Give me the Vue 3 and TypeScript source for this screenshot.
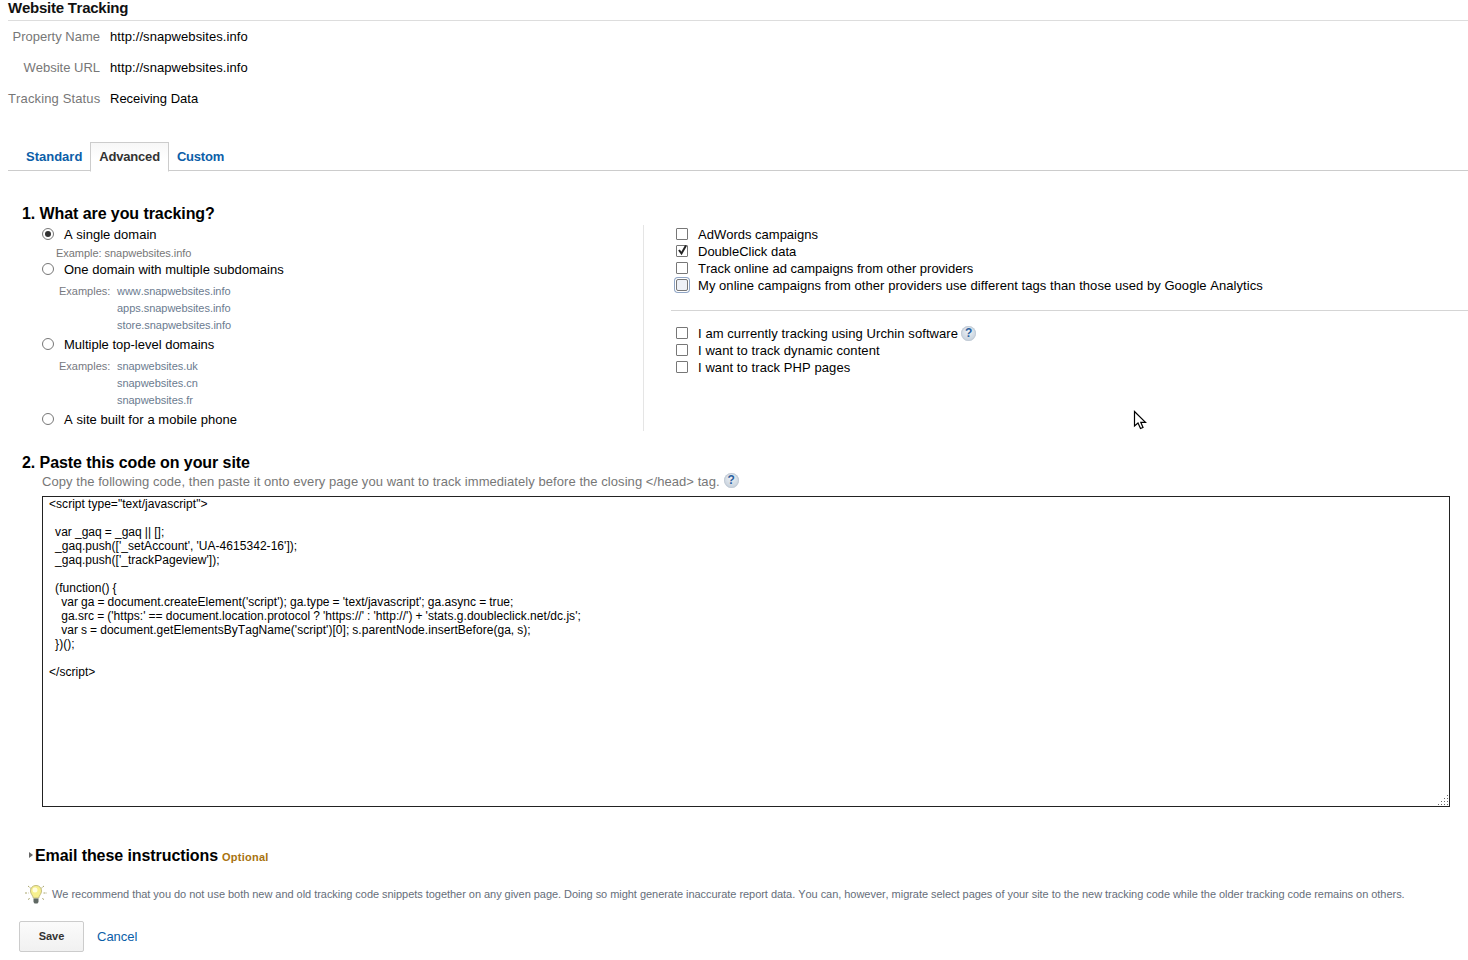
<script setup lang="ts">
const fields = [
  { label: 'Property Name', value: 'http://snapwebsites.info', cls: 'url' },
  { label: 'Website URL', value: 'http://snapwebsites.info', cls: 'url' },
  { label: 'Tracking Status', value: 'Receiving Data', cls: 'status' },
]
const campaigns = [
  { text: 'AdWords campaigns', checked: false, cls: '' },
  { text: 'DoubleClick data', checked: true, cls: '' },
  { text: 'Track online ad campaigns from other providers', checked: false, cls: '' },
  { text: 'My online campaigns from other providers use different tags than those used by Google Analytics', checked: false, focus: true, cls: 'wide' },
]
const code = `<script type="text/javascript">

  var _gaq = _gaq || [];
  _gaq.push(['_setAccount', 'UA-4615342-16']);
  _gaq.push(['_trackPageview']);

  (function() {
    var ga = document.createElement('script'); ga.type = 'text/javascript'; ga.async = true;
    ga.src = ('https:' == document.location.protocol ? 'https://' : 'http://') + 'stats.g.doubleclick.net/dc.js';
    var s = document.getElementsByTagName('script')[0]; s.parentNode.insertBefore(ga, s);
  })();

<\/script>`
const gripDots = [
  [9, 0],
  [6, 3], [9, 3],
  [3, 6], [6, 6], [9, 6],
  [0, 9], [3, 9], [6, 9], [9, 9],
]
</script>

<template>
  <div class="page">
    <h1 class="title">Website Tracking</h1>
    <div class="fields">
      <div v-for="f in fields" :key="f.label" class="field" :class="f.cls">
        <span class="flabel">{{ f.label }}</span>
        <span class="fvalue">{{ f.value }}</span>
      </div>
    </div>

    <div class="tabs">
      <a class="tab">Standard</a>
      <a class="tab active">Advanced</a>
      <a class="tab custom">Custom</a>
    </div>

    <h2 class="h1st">1. What are you tracking?</h2>
    <div class="columns">
      <div class="left">
        <label class="opt"><span class="radio on"></span>A single domain</label>
        <div class="ex1">Example: snapwebsites.info</div>
        <label class="opt"><span class="radio"></span>One domain with multiple subdomains</label>
        <div class="exs">
          <span class="exl">Examples:</span>
          <div class="hosts"><div>www.snapwebsites.info</div><div>apps.snapwebsites.info</div><div>store.snapwebsites.info</div></div>
        </div>
        <label class="opt"><span class="radio"></span>Multiple top-level domains</label>
        <div class="exs">
          <span class="exl">Examples:</span>
          <div class="hosts"><div>snapwebsites.uk</div><div>snapwebsites.cn</div><div>snapwebsites.fr</div></div>
        </div>
        <label class="opt wide2"><span class="radio"></span>A site built for a mobile phone</label>
      </div>
      <div class="right">
        <div class="group">
          <label v-for="c in campaigns" :key="c.text" class="chk" :class="c.cls">
            <span class="box" :class="{ focus: c.focus }">
              <svg v-if="c.checked" width="11" height="11" viewBox="0 0 11 11"><path d="M2 5 L4.500 8.500 L9 0.500" fill="none" stroke="#222" stroke-width="2"/></svg>
            </span>{{ c.text }}
          </label>
        </div>
        <div class="sep"></div>
        <div class="group">
          <label class="chk wider"><span class="box"></span>I am currently tracking using Urchin software<span class="help">?</span></label>
          <label class="chk wider"><span class="box"></span>I want to track dynamic content</label>
          <label class="chk wider"><span class="box"></span>I want to track PHP pages</label>
        </div>
      </div>
    </div>

    <h2 class="h2nd">2. Paste this code on your site</h2>
    <p class="copy">Copy the following code, then paste it onto every page you want to track immediately before the closing &lt;/head&gt; tag.<span class="help">?</span></p>
    <div class="codewrap">
      <textarea class="code" readonly :value="code"></textarea>
      <svg class="grip" width="10" height="10" viewBox="0 0 10 10">
        <rect v-for="d in gripDots" :key="d.join()" :x="d[0]" :y="d[1]" width="1" height="1" fill="#666" />
      </svg>
    </div>

    <div class="email">
      <span class="arrow"></span><span class="etitle">Email these instructions</span><span class="optional">Optional</span>
    </div>

    <div class="tip">
      <svg class="bulb" width="22" height="22" viewBox="0 0 22 22">
        <g stroke="#a9a56c" stroke-width="1" stroke-dasharray="2 1">
          <path d="M3 3 L6 5.500M19 3 L16 5.500M0 10 H3.500M18.500 10 H22M3 16.500 L5.500 15M19 16.500 L16.500 15"/>
        </g>
        <path d="M11 2.500 C7.500 2.500 5.500 5 5.500 8 C5.500 11 8 12.500 8.300 15 H13.700 C14 12.500 16.500 11 16.500 8 C16.500 5 14.500 2.500 11 2.500Z" fill="#f7f08e" stroke="#c4bd80"/>
        <ellipse cx="10" cy="7" rx="2.500" ry="2.500" fill="#fffde0"/>
        <path d="M8.500 15.500 H13.500 V19 L12.500 20.500 H9.500 L8.500 19Z" fill="#5f6863"/>
      </svg>
      <span>We recommend that you do not use both new and old tracking code snippets together on any given page. Doing so might generate inaccurate report data. You can, however, migrate select pages of your site to the new tracking code while the older tracking code remains on others.</span>
    </div>

    <div class="actions">
      <button class="save">Save</button>
      <a class="cancel">Cancel</a>
    </div>

    <svg class="cursor" width="14" height="21" viewBox="0 0 14 21">
      <path d="M1.500 1.500 V16 L5 13 L7.500 18.500 L10 17.500 L7.800 12.300 H12.500Z" fill="#fff" stroke="#000" stroke-width="1.200" stroke-linejoin="miter"/>
    </svg>
  </div>
</template>

<style>
html, body { margin: 0; background: #fff; }
</style>

<style scoped>
.page {
  position: relative;
  width: 1468px;
  height: 960px;
  overflow: hidden;
  padding-left: 8px;
  box-sizing: border-box;
  font: 13px/17px "Liberation Sans", Arial, sans-serif;
  font-kerning: none;
  color: #000;
}
.title {
  margin: 0;
  height: 20px;
  font-size: 15px;
  line-height: 16px;
  font-weight: bold;
  color: #111;
  letter-spacing: -0.25px;
  border-bottom: 1px solid #ddd;
}
.fields { height: 121px; }
.field { display: flex; height: 31px; line-height: 31px; }
.flabel { width: 92px; text-align: right; color: #777; white-space: nowrap; }
.fvalue { margin-left: 10px; color: #000; }
.field.url .fvalue { letter-spacing: 0.08px; }
.field.status .flabel { letter-spacing: 0.13px; }
.tabs {
  display: flex;
  height: 28px;
  padding-left: 10px;
  border-bottom: 1px solid #ccc;
}
.tab {
  padding: 0 8px;
  font-weight: bold;
  line-height: 30px;
  color: #0b5ea8;
  height: 28px;
}
.tab.active {
  color: #333;
  border: 1px solid #ccc;
  border-bottom: 1px solid #fff;
  background: linear-gradient(#f7f7f7, #fff 60%);
  line-height: 27px;
  letter-spacing: -0.2px;
}
.tab.custom { letter-spacing: -0.2px; }
.h1st, .h2nd {
  margin: 0;
  font-size: 16px;
  line-height: 20px;
  font-weight: bold;
  margin-left: 14px;
  letter-spacing: -0.08px;
}
.h1st { margin-top: 33px; }
.columns { display: flex; height: 206px; margin-top: 1px; }
.left {
  width: 636px;
  box-sizing: border-box;
  padding-left: 34px;
  padding-top: 1px;
  border-right: 1px solid #e5e5e5;
}
.opt { display: flex; align-items: center; height: 17px; line-height: 17px; white-space: nowrap; }
.opt.wide2 { letter-spacing: 0.06px; }
.radio {
  width: 10px;
  height: 10px;
  border: 1px solid #777;
  border-radius: 50%;
  margin: 0 10px 2px 0;
  background: #fff;
  position: relative;
  flex: none;
}
.radio.on::after {
  content: "";
  position: absolute;
  left: 2px;
  top: 2px;
  width: 6px;
  height: 6px;
  border-radius: 50%;
  background: #333;
}
.ex1 { font-size: 11px; line-height: 17px; padding-top: 2px; margin-bottom: -1px; color: #777; margin-left: 14px; letter-spacing: -0.04px; }
.exs {
  display: flex;
  font-size: 11px;
  line-height: 17px;
  color: #77797f;
  padding: 5px 0 2px 17px;
}
.exl { width: 58px; }
.hosts { color: #6b7b8f; letter-spacing: -0.04px; }
.right { flex: 1; padding-left: 27px; padding-top: 1px; }
.chk { display: flex; align-items: center; height: 17px; white-space: nowrap; }
.chk.wide { letter-spacing: 0.05px; }
.chk.wider { letter-spacing: 0.08px; }
.box {
  width: 10px;
  height: 10px;
  border: 1px solid #777;
  border-radius: 1px;
  margin: 0 10px 2px 5px;
  flex: none;
  position: relative;
  background: #fff;
}
.box svg { position: absolute; left: 0; top: -1px; }
.box.focus {
  background: #eef1f7;
  border-radius: 2px;
  box-shadow: 0 0 0 1px #fff, 0 0 0 2px #8fa5c5;
}
.sep { border-top: 1px solid #d5d5d5; margin: 16px 0 14px; }
.help {
  display: inline-block;
  width: 15px;
  height: 15px;
  line-height: 15px;
  margin-left: 3px;
  border-radius: 50%;
  background: radial-gradient(circle at 50% 35%, #eef2f6, #b9c6d4);
  box-shadow: inset 0 0 0 1px #c3ccd6;
  color: #2a5f9e;
  font-size: 12px;
  font-weight: bold;
  letter-spacing: 0;
  text-align: center;
  vertical-align: top;
}
.h2nd { margin-top: 22px; }
.copy {
  margin: 0 0 0 34px;
  color: #777;
  line-height: 17px;
  height: 23px;
  letter-spacing: 0.06px;
}
.copy .help { margin-left: 4px; }
.codewrap { position: relative; margin-left: 34px; width: 1408px; height: 311px; }
.code {
  display: block;
  box-sizing: border-box;
  width: 100%;
  height: 100%;
  border: 1px solid #222;
  padding: 0 6px;
  font: 12px/14px "Liberation Sans", Arial, sans-serif;
  font-kerning: none;
  letter-spacing: 0.04px;
  word-spacing: -0.33px;
  color: #000;
  background: #fff;
  outline: none;
  overflow: hidden;
  resize: none;
}
.grip { position: absolute; left: 1396px; top: 299px; }
.email {
  margin-top: 39px;
  margin-left: 21px;
  display: flex;
  align-items: baseline;
  height: 20px;
}
.arrow {
  width: 0;
  height: 0;
  border-left: 4px solid #666;
  border-top: 3.500px solid transparent;
  border-bottom: 3.500px solid transparent;
  margin-right: 2px;
  transform: translateY(-3px);
}
.etitle { font-size: 16px; font-weight: bold; line-height: 20px; letter-spacing: -0.08px; }
.optional { font-size: 11px; font-weight: bold; color: #a8730f; margin-left: 4px; letter-spacing: 0.25px; }
.tip {
  display: flex;
  align-items: center;
  margin-top: 17px;
  margin-left: 17px;
  font-size: 11px;
  color: #666e7a;
  height: 22px;
  white-space: nowrap;
  letter-spacing: -0.04px;
}
.bulb { margin-right: 5px; flex: none; }
.actions { display: flex; align-items: center; margin-top: 16px; margin-left: 11px; }
.save {
  width: 65px;
  height: 31px;
  border: 1px solid #ccc;
  border-radius: 2px;
  background: linear-gradient(#fbfbfb, #f1f1f1);
  font: bold 11px "Liberation Sans", Arial, sans-serif;
  color: #333;
  padding: 0 0 2px;
}
.cancel { margin-left: 13px; color: #0b5ea8; }
.cursor { position: absolute; left: 1133px; top: 410px; }
</style>
